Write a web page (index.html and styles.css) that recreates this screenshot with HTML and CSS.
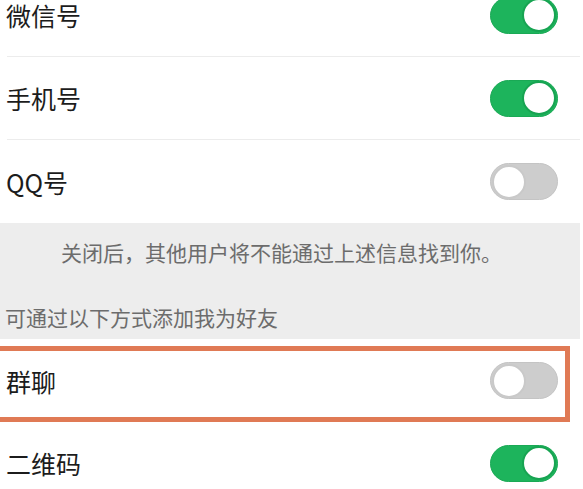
FILE: index.html
```html
<!DOCTYPE html>
<html lang="zh-CN">
<head>
<meta charset="utf-8">
<title>添加我的方式</title>
<link rel="stylesheet" href="styles.css">
</head>
<body>
<div class="screen">
  <div class="list list-top">
    <div class="row"><span class="label">微信号</span><span class="switch on"><span class="knob"></span></span></div>
    <div class="row"><span class="label">手机号</span><span class="switch on"><span class="knob"></span></span></div>
    <div class="row row-last"><span class="label">QQ号</span><span class="switch"><span class="knob"></span></span></div>
  </div>
  <div class="note">
    <p class="note-main">关闭后，其他用户将不能通过上述信息找到你。</p>
    <p class="note-head">可通过以下方式添加我为好友</p>
  </div>
  <div class="list">
    <div class="row row-marked"><span class="label">群聊</span><span class="switch"><span class="knob"></span></span><span class="mark"></span></div>
    <div class="row"><span class="label">二维码</span><span class="switch on"><span class="knob"></span></span></div>
  </div>
</div>
</body>
</html>
```

FILE: styles.css
```css
html, body {
  margin: 0;
  padding: 0;
  background: #ffffff;
  overflow: hidden;
}

.screen {
  width: 580px;
  height: 489px;
  overflow: hidden;
  font-family: "Noto Sans CJK SC", "Noto Sans", sans-serif;
  background: #ffffff;
}

.list {
  background: #ffffff;
}

.list-top {
  margin-top: -26px;
}

.row {
  position: relative;
  height: 82px;
  margin-left: 7px;
  padding-right: 22px;
  border-bottom: 1px solid #ececec;
  display: flex;
  align-items: center;
  justify-content: space-between;
}

.row-last {
  border-bottom: none;
  height: 83px;
}

.label {
  font-size: 25px;
  color: #1c1c1c;
  margin-left: -1px;
  line-height: 34px;
}

.switch {
  position: relative;
  box-sizing: border-box;
  width: 68px;
  height: 37px;
  border-radius: 19px;
  background: #cdcdcd;
  border: 1px solid #c4c4c4;
  display: flex;
  align-items: center;
  justify-content: flex-start;
  padding: 0 1px;
}

.switch .knob {
  box-sizing: border-box;
  width: 34px;
  height: 34px;
  border-radius: 50%;
  background: #ffffff;
  border: 2px solid #c9c9c9;
}

.switch.on {
  background: #1db45c;
  border-color: #1aa955;
  justify-content: flex-end;
}

.switch.on .knob {
  border-color: #17a452;
}

.note {
  background: #ededed;
  height: 116px;
  box-sizing: border-box;
  padding-top: 15px;
}

.note p {
  margin: 0;
  font-size: 21px;
  line-height: 28px;
  color: #6c6c6c;
}

.note-main {
  padding-left: 61px;
}

.note-head {
  margin-top: 37px !important;
  padding-left: 5px;
}

.row-marked {
  height: 83px;
  border-bottom: none;
}

.mark {
  position: absolute;
  top: 7px;
  bottom: 0;
  left: -12px;
  right: 10px;
  border: 5px solid #e07a55;
  pointer-events: none;
}
```
